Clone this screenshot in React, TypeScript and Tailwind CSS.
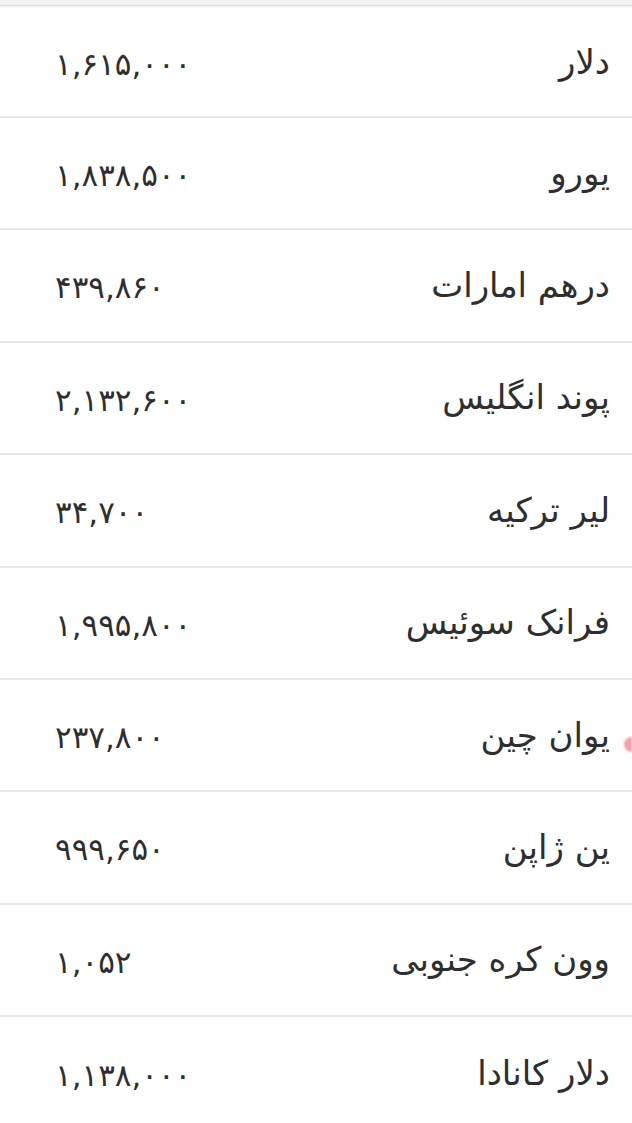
import React from "react";

const rates = [
  { name: "دلار", price: "۱,۶۱۵,۰۰۰" },
  { name: "یورو", price: "۱,۸۳۸,۵۰۰" },
  { name: "درهم امارات", price: "۴۳۹,۸۶۰" },
  { name: "پوند انگلیس", price: "۲,۱۳۲,۶۰۰" },
  { name: "لیر ترکیه", price: "۳۴,۷۰۰" },
  { name: "فرانک سوئیس", price: "۱,۹۹۵,۸۰۰" },
  { name: "یوان چین", price: "۲۳۷,۸۰۰" },
  { name: "ین ژاپن", price: "۹۹۹,۶۵۰" },
  { name: "وون کره جنوبی", price: "۱,۰۵۲" },
  { name: "دلار کانادا", price: "۱,۱۳۸,۰۰۰" },
];

export default function App() {
  return (
    <div
      dir="rtl"
      className="relative min-h-screen bg-white text-[#2e2e2e]"
      style={{ fontFamily: '"DejaVu Sans", "Noto Sans", sans-serif' }}
    >
      <div className="h-[6px] bg-[#f3f3f3] border-b border-[#dcdcdc]" />
      <div className="h-[2px] bg-gradient-to-b from-[#ececec] to-white" />
      <ul>
        {rates.map((r, i) => (
          <li
            key={r.name}
            className={`flex items-center justify-between pr-[22px] pl-[55px] ${
              i === 0 ? "h-[110px]" : "h-[112.4px]"
            } ${i < rates.length - 1 ? "border-b-2 border-[#e8e8e8]" : ""}`}
          >
            <span className="text-[34px]">{r.name}</span>
            <span dir="ltr" className="text-[31px] pt-[4px] tracking-[0.5px]">
              {r.price}
            </span>
          </li>
        ))}
      </ul>
      <span className="absolute right-0 top-[737px] h-[15px] w-[8px] rounded-l-full bg-[#f0a0a8] blur-[1px]" />
    </div>
  );
}
